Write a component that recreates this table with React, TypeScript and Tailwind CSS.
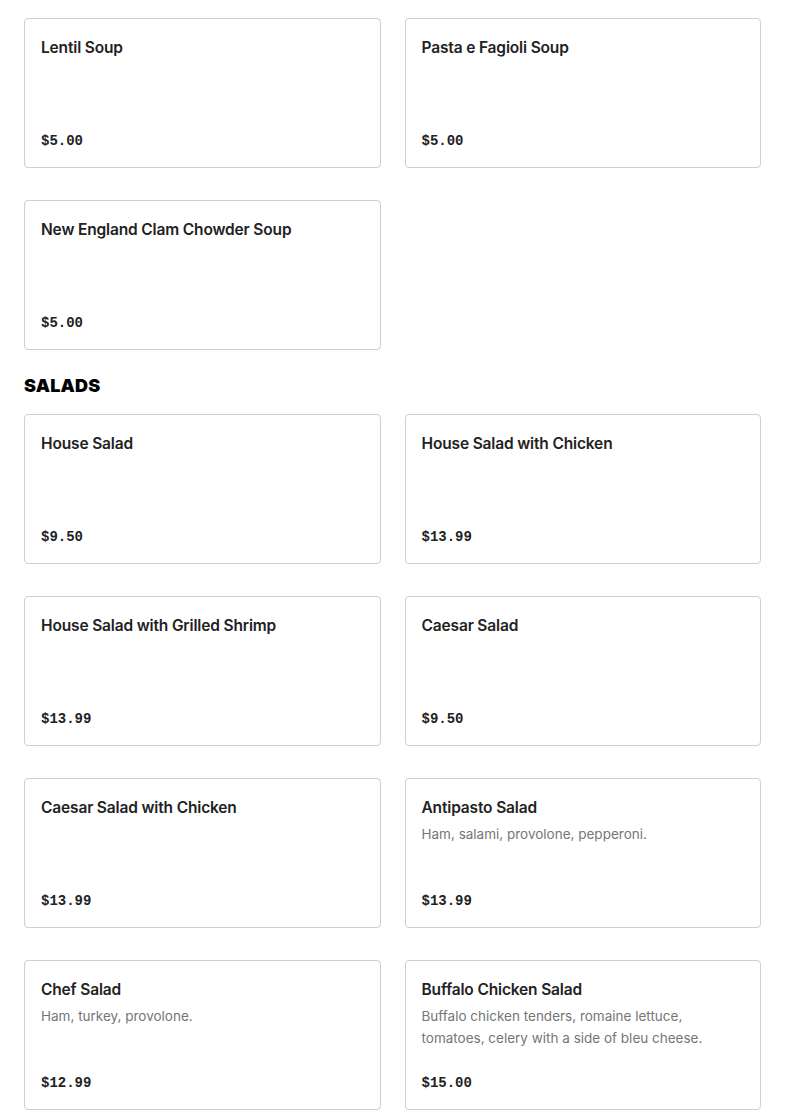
type Item = { name: string; price: string; desc?: string };

const soups: Item[] = [
  { name: "Lentil Soup", price: "$5.00" },
  { name: "Pasta e Fagioli Soup", price: "$5.00" },
  { name: "New England Clam Chowder Soup", price: "$5.00" },
];

const salads: Item[] = [
  { name: "House Salad", price: "$9.50" },
  { name: "House Salad with Chicken", price: "$13.99" },
  { name: "House Salad with Grilled Shrimp", price: "$13.99" },
  { name: "Caesar Salad", price: "$9.50" },
  { name: "Caesar Salad with Chicken", price: "$13.99" },
  { name: "Antipasto Salad", price: "$13.99", desc: "Ham, salami, provolone, pepperoni." },
  { name: "Chef Salad", price: "$12.99", desc: "Ham, turkey, provolone." },
  {
    name: "Buffalo Chicken Salad",
    price: "$15.00",
    desc: "Buffalo chicken tenders, romaine lettuce, tomatoes, celery with a side of bleu cheese.",
  },
];

function MenuCard({ item }: { item: Item }) {
  return (
    <div className="flex h-[150px] flex-col justify-between rounded-[4px] border border-[#cfcfcf] bg-white px-4 pt-[17px] pb-[15px]">
      <div>
        <h3 className="text-[15.5px] font-semibold leading-6 tracking-[-0.01em] text-[#222]">{item.name}</h3>
        {item.desc && (
          <p className="mt-[3px] pr-6 text-[13.5px] leading-[22px] text-[#767676]">{item.desc}</p>
        )}
      </div>
      <p className="font-['Liberation_Mono',monospace] text-[14px] font-bold leading-[22px] text-[#222]">
        {item.price}
      </p>
    </div>
  );
}

function Grid({ items }: { items: Item[] }) {
  return (
    <div className="grid grid-cols-2 gap-x-6 gap-y-8">
      {items.map((item) => (
        <MenuCard item={item} key={item.name} />
      ))}
    </div>
  );
}

export default function App() {
  return (
    <div className="min-h-screen bg-white px-6 pt-[18px] font-['Inter',sans-serif]">
      <Grid items={soups} />
      <h2 className="mt-6 mb-4 text-[18px] font-black uppercase leading-6 tracking-[0.01em] text-black">
        Salads
      </h2>
      <Grid items={salads} />
    </div>
  );
}
